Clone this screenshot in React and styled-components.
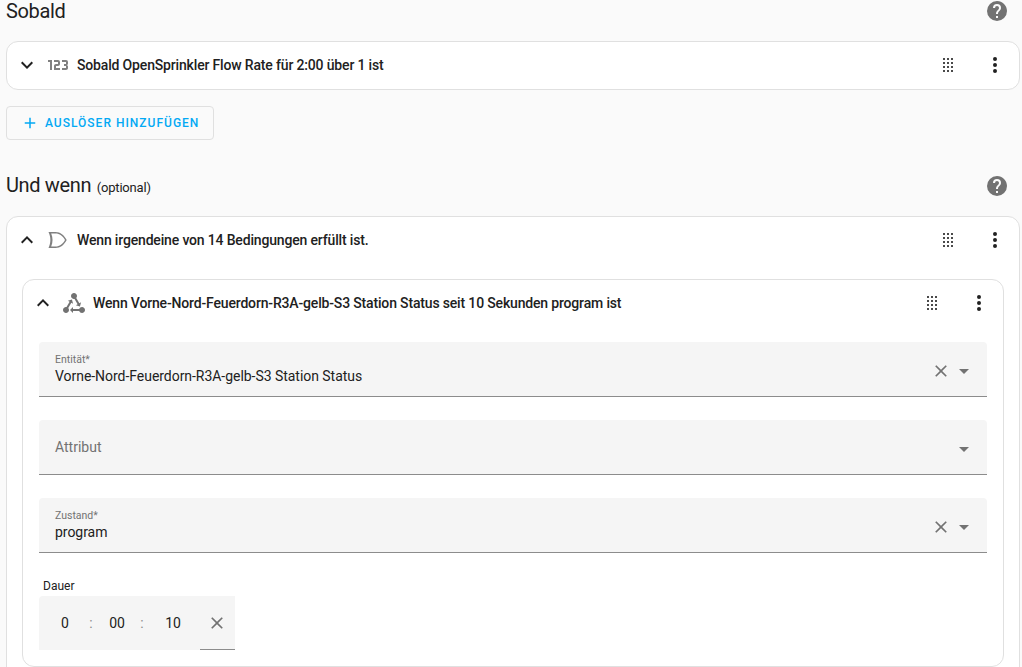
import React from 'react';
import styled, { createGlobalStyle } from 'styled-components';

const paths = {
  chevronDown: 'M7.41,8.58L12,13.17L16.59,8.58L18,10L12,16L6,10L7.41,8.58Z',
  chevronUp: 'M7.41,15.41L12,10.83L16.59,15.41L18,14L12,8L6,14L7.41,15.41Z',
  numeric:
    'M4,17V9H2V7H6V17H4M22,15C22,16.11 21.1,17 20,17H16V15H20V13H18V11H20V9H16V7H20A2,2 0 0,1 22,9V10.5A1.5,1.5 0 0,1 20.5,12A1.5,1.5 0 0,1 22,13.5V15M14,15V17H8V13C8,11.89 8.9,11 10,11H12V9H8V7H12A2,2 0 0,1 14,9V11C14,12.11 13.1,13 12,13H10V15H14Z',
  help: 'M15.07,11.25L14.17,12.17C13.45,12.89 13,13.5 13,15H11V14.5C11,13.39 11.45,12.39 12.17,11.67L13.41,10.41C13.78,10.05 14,9.55 14,9C14,7.89 13.1,7 12,7A2,2 0 0,0 10,9H8A4,4 0 0,1 12,5A4,4 0 0,1 16,9C16,9.88 15.64,10.67 15.07,11.25M13,19H11V17H13M12,2A10,10 0 0,0 2,12A10,10 0 0,0 12,22A10,10 0 0,0 22,12C22,6.47 17.5,2 12,2Z',
  dots: 'M12,16A2,2 0 0,1 14,18A2,2 0 0,1 12,20A2,2 0 0,1 10,18A2,2 0 0,1 12,16M12,10A2,2 0 0,1 14,12A2,2 0 0,1 12,14A2,2 0 0,1 10,12A2,2 0 0,1 12,10M12,4A2,2 0 0,1 14,6A2,2 0 0,1 12,8A2,2 0 0,1 10,6A2,2 0 0,1 12,4Z',
  drag: 'M7,19V17H9V19H7M11,19V17H13V19H11M15,19V17H17V19H15M7,15V13H9V15H7M11,15V13H13V15H11M15,15V13H17V15H15M7,11V9H9V11H7M11,11V9H13V11H11M15,11V9H17V11H15M7,7V5H9V7H7M11,7V5H13V7H11M15,7V5H17V7H15Z',
  close:
    'M19,6.41L17.59,5L12,10.59L6.41,5L5,6.41L10.59,12L5,17.59L6.41,19L12,13.41L17.59,19L19,17.59L13.41,12L19,6.41Z',
  menuDown: 'M7,10L12,15L17,10H7Z',
  plus: 'M19,13H13V19H11V13H5V11H11V5H13V11H19V13Z',
  gateOr:
    'M2.5,4H9.5C14.5,4 18,7 20.7,12C18,17 14.5,20 9.5,20H2.5C5,15 5,9 2.5,4ZM5.2,5.5C7,9.5 7,14.5 5.2,18.5H9.5C13.6,18.5 16.8,16 19,12C16.8,8 13.6,5.5 9.5,5.5H5.2Z',
  stateMachine:
    'M6.27 17.05C6.72 17.58 7 18.25 7 19C7 20.66 5.66 22 4 22S1 20.66 1 19 2.34 16 4 16C4.18 16 4.36 16 4.53 16.05L7.6 10.69L5.86 9.7L9.95 8.58L11.07 12.67L9.33 11.68L6.27 17.05M20 16C18.7 16 17.6 16.84 17.18 18H11V16L8 19L11 22V20H17.18C17.6 21.16 18.7 22 20 22C21.66 22 23 20.66 23 19S21.66 16 20 16M12 8C12.18 8 12.36 8 12.53 7.95L15.6 13.31L13.86 14.3L17.95 15.42L19.07 11.33L17.33 12.32L14.27 6.95C14.72 6.42 15 5.75 15 5C15 3.34 13.66 2 12 2S9 3.34 9 5 10.34 8 12 8Z',
};

const GlobalStyle = createGlobalStyle`
  html, body {
    margin: 0;
    height: 667px;
    overflow: hidden;
    background: #fafafa;
  }
  body {
    font-family: Roboto, "Liberation Sans", sans-serif;
    color: #212121;
  }
`;

const Page = styled.div`
  padding: 0 2px 0 6px;
`;

const Section = styled.section`
  margin-bottom: 35px;
`;

const HeadingRow = styled.div`
  display: flex;
  align-items: center;
  justify-content: space-between;
  height: 22px;
  margin-bottom: 19px;
  padding-right: 11px;
`;

const Heading = styled.h2`
  margin: 0;
  font-size: 20px;
  font-weight: 400;
  line-height: 22px;
  letter-spacing: -0.35px;
`;

const Optional = styled.small`
  font-size: 13px;
  margin-left: 1px;
  letter-spacing: -0.2px;
`;

const Svg = styled.svg`
  display: block;
  flex: none;
  width: 24px;
  height: 24px;
  fill: ${(p) => p.$color || '#212121'};
`;

const Icon = ({ name, color }) => (
  <Svg viewBox="0 0 24 24" $color={color}>
    <path d={paths[name]} />
  </Svg>
);

const Card = styled.div`
  background: #fff;
  border: 1px solid #e0e0e0;
  border-radius: 12px;
`;

const CardHeader = styled.div`
  display: flex;
  align-items: center;
  box-sizing: border-box;
  height: 47px;
  padding: 0 12px 2px 8px;
  gap: 7px;
`;

const CardTitle = styled.div`
  flex: 1;
  font-size: 14px;
  font-weight: 500;
  line-height: 20px;
  letter-spacing: -0.165px;
`;

const HeaderActions = styled.div`
  display: flex;
  gap: 23px;
`;

const CardBody = styled.div`
  padding: 15px 15px 16px;
`;

const InnerBody = styled.div`
  display: flex;
  flex-direction: column;
  gap: 23px;
  padding: 15px 16px 16px;
`;

const AddButton = styled.button`
  display: flex;
  align-items: center;
  gap: 6px;
  height: 34px;
  margin-top: 16px;
  padding: 0 14px;
  background: transparent;
  border: 1px solid #e0e0e0;
  border-radius: 4px;
  color: #03a9f4;
  font-family: inherit;
  font-size: 12px;
  font-weight: 500;
  letter-spacing: 1px;

  svg {
    width: 18px;
    height: 18px;
  }
`;

const Field = styled.div`
  display: flex;
  align-items: center;
  height: 55px;
  padding: 0 11px 0 16px;
  background: #f5f5f5;
  border-bottom: 1px solid #8c8c8c;
  border-radius: 4px 4px 0 0;
  box-sizing: border-box;
`;

const FieldText = styled.div`
  flex: 1;
  display: flex;
  flex-direction: column;
  padding-top: ${(p) => (p.$filled ? '1px' : '0')};
`;

const FieldLabel = styled.span`
  font-size: 10.5px;
  line-height: 13px;
  color: #727272;
`;

const FieldValue = styled.span`
  font-size: 14px;
  line-height: 20px;
  letter-spacing: -0.04px;
`;

const Placeholder = styled.span`
  font-size: 14px;
  color: #727272;
`;

const FieldIcons = styled.div`
  display: flex;
  align-items: center;
  gap: 1px;
  padding-top: 3px;

  > svg:not(:last-child) {
    width: 20px;
    height: 20px;
  }
`;

const DurationLabel = styled.div`
  font-size: 12px;
  line-height: 16px;
  padding-left: 4px;
  margin: 2px 0 2px;
`;

const TimeBox = styled.div`
  position: relative;
  display: flex;
  align-items: center;
  width: 196px;
  height: 54px;
  padding-left: 1px;
  box-sizing: border-box;
  background: #f5f5f5;
  border-radius: 4px 0 0 0;
  font-size: 14px;

  svg {
    width: 20px;
    height: 20px;
    margin-left: 3px;
  }

  &::after {
    content: '';
    position: absolute;
    right: 0;
    bottom: 0;
    width: 35px;
    height: 1px;
    background: #8c8c8c;
  }
`;

const TimePart = styled.span`
  width: ${(p) => p.$w}px;
  text-align: center;
`;

const TimeSep = styled.span`
  display: flex;
  justify-content: center;
  width: ${(p) => p.$w}px;
  color: #8c8c8c;
`;

const Duration = styled.div``;

const Actions = () => (
  <HeaderActions>
    <Icon name="drag" color="#4a4a4a" />
    <Icon name="dots" />
  </HeaderActions>
);

const SelectField = ({ label, value, placeholder, clearable }) => (
  <Field>
    <FieldText $filled={!!value}>
      {label && <FieldLabel>{label}</FieldLabel>}
      {value && <FieldValue>{value}</FieldValue>}
      {placeholder && <Placeholder>{placeholder}</Placeholder>}
    </FieldText>
    <FieldIcons>
      {clearable && <Icon name="close" color="#727272" />}
      <Icon name="menuDown" color="#727272" />
    </FieldIcons>
  </Field>
);

export default function App() {
  return (
    <Page>
      <GlobalStyle />
      <Section>
        <HeadingRow>
          <Heading>Sobald</Heading>
          <Icon name="help" color="#727272" />
        </HeadingRow>
        <Card>
          <CardHeader>
            <Icon name="chevronDown" />
            <Icon name="numeric" color="#808080" />
            <CardTitle>Sobald OpenSprinkler Flow Rate für 2:00 über 1 ist</CardTitle>
            <Actions />
          </CardHeader>
        </Card>
        <AddButton>
          <Icon name="plus" color="#03a9f4" />
          AUSLÖSER HINZUFÜGEN
        </AddButton>
      </Section>

      <Section>
        <HeadingRow>
          <Heading>
            Und wenn <Optional>(optional)</Optional>
          </Heading>
          <Icon name="help" color="#727272" />
        </HeadingRow>
        <Card>
          <CardHeader>
            <Icon name="chevronUp" />
            <Icon name="gateOr" color="#808080" />
            <CardTitle>Wenn irgendeine von 14 Bedingungen erfüllt ist.</CardTitle>
            <Actions />
          </CardHeader>
          <CardBody>
            <Card>
              <CardHeader>
                <Icon name="chevronUp" />
                <Icon name="stateMachine" color="#727272" />
                <CardTitle>
                  Wenn Vorne-Nord-Feuerdorn-R3A-gelb-S3 Station Status seit 10 Sekunden program ist
                </CardTitle>
                <Actions />
              </CardHeader>
              <InnerBody>
                <SelectField
                  label="Entität*"
                  value="Vorne-Nord-Feuerdorn-R3A-gelb-S3 Station Status"
                  clearable
                />
                <SelectField placeholder="Attribut" />
                <SelectField label="Zustand*" value="program" clearable />
                <Duration>
                  <DurationLabel>Dauer</DurationLabel>
                  <TimeBox>
                    <TimePart $w={50}>0</TimePart>
                    <TimeSep $w={2}>:</TimeSep>
                    <TimePart $w={50}>00</TimePart>
                    <TimeSep $w={0}>:</TimeSep>
                    <TimePart $w={62}>10</TimePart>
                    <Icon name="close" color="#727272" />
                  </TimeBox>
                </Duration>
              </InnerBody>
            </Card>
          </CardBody>
        </Card>
      </Section>
    </Page>
  );
}
